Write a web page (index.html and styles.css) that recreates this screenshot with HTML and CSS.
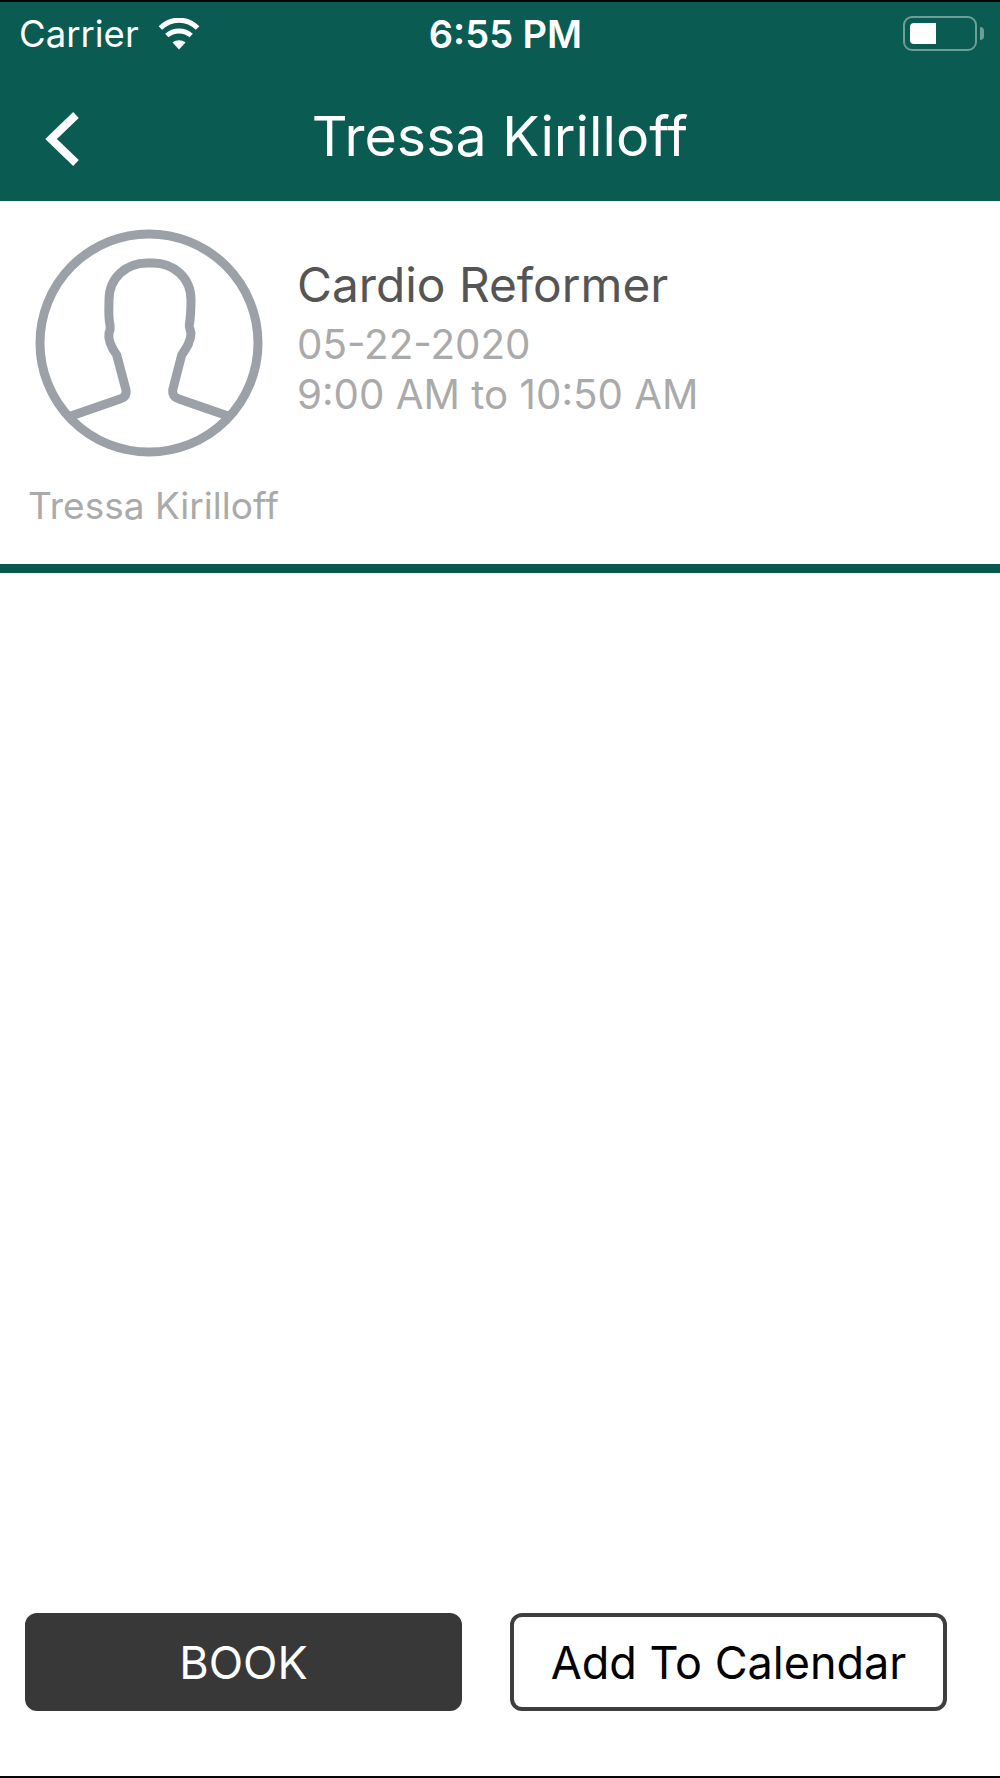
FILE: index.html
```html
<!DOCTYPE html>
<html lang="en">
<head>
    <meta charset="UTF-8">
    <meta name="viewport" content="width=device-width, initial-scale=1.0">
    <title>Tressa Kirilloff</title>
    <link rel="stylesheet" href="styles.css">
</head>
<body>
    <div class="screen">
        <div class="topbar">
            <div class="status">
                <div class="status-left">
                    <span class="carrier">Carrier</span>
                    <svg class="wifi" width="44" height="32" viewBox="0 0 44 32">
                        <path d="M22 31.5 L15.5 24.6 C19.2 21.6 24.8 21.6 28.5 24.6 Z" fill="#fff"/>
                        <path d="M9.8 17.5 C16.6 11.5 27.4 11.5 34.2 17.5" fill="none" stroke="#fff" stroke-width="5"/>
                        <path d="M3.4 10 C14 -0.5 30 -0.5 40.6 10" fill="none" stroke="#fff" stroke-width="5"/>
                    </svg>
                </div>
                <span class="time">6:55 PM</span>
                <div class="status-right">
                    <div class="battery"><div class="battery-level"></div></div>
                    <div class="battery-nub"></div>
                </div>
            </div>
            <div class="navbar">
                <svg class="back" width="40" height="58" viewBox="0 0 40 58">
                    <path d="M33 5 L8 29 L33 53" fill="none" stroke="#fff" stroke-width="8"/>
                </svg>
                <h1 class="title">Tressa Kirilloff</h1>
            </div>
        </div>

        <div class="booking">
            <div class="person">
                <svg class="avatar" width="228" height="228" viewBox="0 0 228 228">
                    <circle cx="114" cy="114" r="109" fill="none" stroke="#9ca1a8" stroke-width="9"/>
                    <path d="M36 187 L85 170 Q92 168 91 161 L81.7 126 C76 118 73 110 74 104 C76 100 75 98 75 96 C73 86 74 80 74 71 C74 48 92 34 112 34 H118 C138 34 156 48 156 71 C156 80 156 86 154.300 96 C154 98 155 100 156 104 C156 112 152 118 146.700 126 L137.700 161 Q137 168 144 170 L193 187" fill="none" stroke="#9ca1a8" stroke-width="9"/>
                </svg>
                <div class="person-name">Tressa Kirilloff</div>
            </div>
            <div class="details">
                <div class="class-name">Cardio Reformer</div>
                <div class="class-info">05-22-2020</div>
                <div class="class-info">9:00 AM to 10:50 AM</div>
            </div>
        </div>
        <div class="rule"></div>

        <div class="actions">
            <button class="btn btn-book">BOOK</button>
            <button class="btn btn-calendar">Add To Calendar</button>
        </div>
    </div>
</body>
</html>
```

FILE: styles.css
```css
* {
    box-sizing: border-box;
}

body {
    margin: 0;
    background: #fff;
    font-family: Inter, "Liberation Sans", sans-serif;
}

.screen {
    display: flex;
    flex-direction: column;
    height: 1778px;
    border-top: 2px solid #050505;
    border-bottom: 2px solid #050505;
}

/* green header */
.topbar {
    height: 199px;
    background: #0a5b51;
    color: #fff;
}

.status {
    display: grid;
    grid-template-columns: 1fr auto 1fr;
    align-items: center;
    height: 62px;
    padding: 0 16px 0 19px;
}

.status-left {
    display: flex;
    align-items: center;
    gap: 18px;
}

.carrier {
    font-size: 36.5px;
    line-height: 62px;
    padding-top: 1px;
}

.time {
    margin-left: 8px;
    padding-top: 1px;
    font-size: 38px;
    font-weight: 600;
}

.status-right {
    display: flex;
    align-items: center;
    justify-content: flex-end;
    gap: 3px;
}

.battery {
    width: 74px;
    height: 35px;
    padding: 5px;
    border: 2px solid #6d9f98;
    border-radius: 9px;
}

.battery-level {
    width: 26px;
    height: 100%;
    background: #fff;
    border-radius: 4px 0 0 4px;
}

.battery-nub {
    width: 4px;
    height: 13px;
    background: #6d9f98;
    border-radius: 0 5px 5px 0;
}

.navbar {
    display: flex;
    align-items: center;
    justify-content: center;
    position: relative;
    height: 136px;
    padding-top: 6px;
}

.back {
    position: absolute;
    left: 43px;
    top: 46px;
}

.title {
    margin: 0;
    font-size: 55.5px;
    font-weight: 400;
}

/* class info */
.booking {
    display: flex;
    height: 363px;
    padding: 28px 0 0 25px;
}

.person {
    display: flex;
    flex-direction: column;
    align-items: flex-start;
    width: 248px;
}

.avatar {
    display: block;
    margin-left: 10px;
}

.person-name {
    margin: 26px 0 0 3px;
    font-size: 37px;
    white-space: nowrap;
    color: #aaa;
}

.details {
    padding: 27px 0 0 24px;
}

.class-name {
    margin-bottom: 6px;
    font-size: 47.8px;
    line-height: 58px;
    color: #555;
}

.class-info {
    font-size: 40.3px;
    line-height: 50px;
    color: #aaa;
}

.rule {
    height: 9px;
    background: #08584e;
}

/* bottom buttons */
.actions {
    display: flex;
    gap: 48px;
    margin-top: auto;
    padding: 0 53px 65px 25px;
}

.btn {
    flex: 1;
    height: 98px;
    padding: 0;
    font-family: inherit;
    font-size: 45px;
    border-radius: 12px;
}

.btn-book {
    background: #383838;
    border: 4px solid #383838;
    color: #fff;
}

.btn-calendar {
    background: #fff;
    border: 4px solid #3e3e3e;
    color: #000;
}
```
